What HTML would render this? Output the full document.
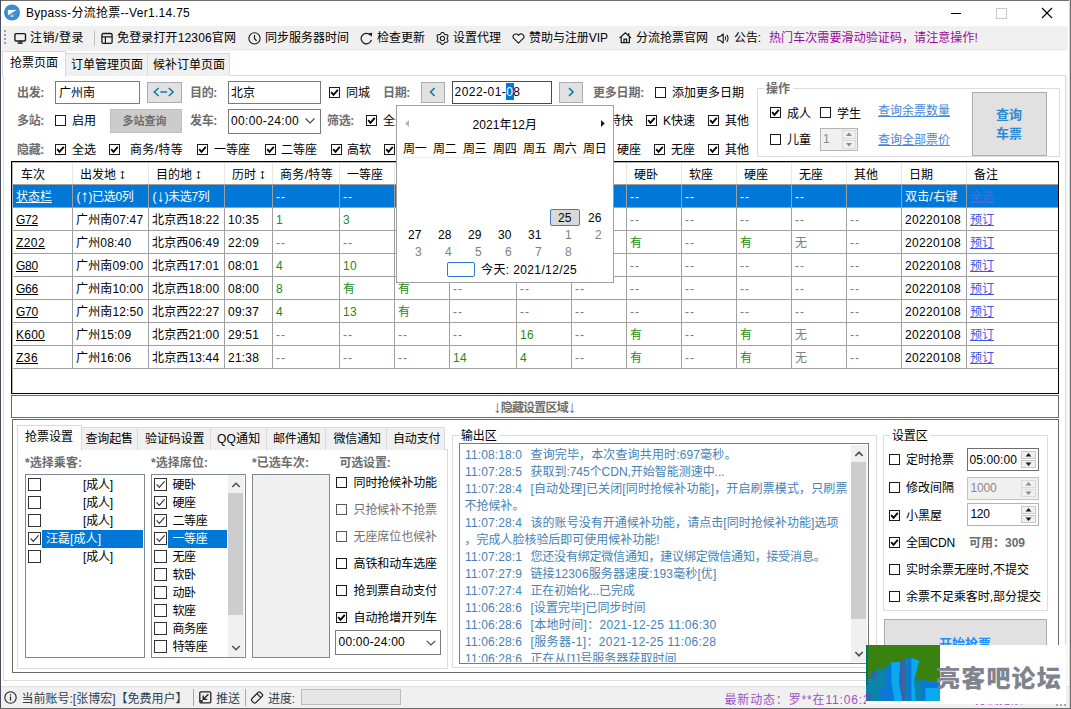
<!DOCTYPE html>
<html lang="zh-CN"><head><meta charset="utf-8"><title>Bypass-分流抢票--Ver1.14.75</title>
<style>
html,body{margin:0;padding:0;}
body{width:1071px;height:709px;overflow:hidden;position:relative;background:#fff;
 font-family:"Liberation Sans","Noto Sans CJK SC",sans-serif;font-size:12px;color:#000;}
.b{position:absolute;box-sizing:content-box;}
.t{position:absolute;white-space:nowrap;}
.ar{font-size:17px;line-height:0;font-weight:normal;position:relative;top:1px;}
</style></head>
<body>
<div class="b" style="left:0px;top:0px;width:1071px;height:709px;background:#fff;"></div>
<div class="b" style="left:0px;top:0px;width:1071px;height:1px;background:#6e6e6e;"></div>
<div class="b" style="left:0px;top:0px;width:1px;height:709px;background:#4a4e5c;"></div>
<div class="b" style="left:1069px;top:0px;width:1px;height:709px;background:#d8d8d8;"></div>
<div class="b" style="left:1070px;top:0px;width:1px;height:709px;background:#6e6e6e;"></div>
<div class="b" style="left:0px;top:708px;width:1071px;height:1px;background:#6a6a6a;"></div>
<svg class="b" style="left:4px;top:4px;" width="16" height="17" viewBox="0 0 16 17"><circle cx="8" cy="8.5" r="8" fill="#3b8ad6"/><rect x="3.9" y="5.9" width="8.2" height="4.9" fill="#fff"/><path d="M12.1 6.3 V10.8 H5 Z" fill="#3b8ad6"/><rect x="6.7" y="11.4" width="2.8" height="1.3" fill="#fff"/></svg>
<span class="t" style="left:26px;top:5.0px;line-height:16px;letter-spacing:0.29px;">Bypass-分流抢票--Ver1.14.75</span>
<div class="b" style="left:951px;top:13px;width:10px;height:1px;background:#000;"></div>
<div class="b" style="left:996px;top:8px;width:9px;height:9px;border:1px solid #c8c8c8;"></div>
<svg class="b" style="left:1041px;top:7px;" width="12" height="12" viewBox="0 0 12 12"><path d="M1 1 L11 11 M11 1 L1 11" stroke="#000" stroke-width="1.1" fill="none"/></svg>
<div class="b" style="left:2px;top:26px;width:1066px;height:25px;background:#f0f0f0;border-radius:0 3px 3px 0;"></div>
<div class="b" style="left:4px;top:30px;width:2px;height:2px;background:#a0a0a0;"></div>
<div class="b" style="left:4px;top:34px;width:2px;height:2px;background:#a0a0a0;"></div>
<div class="b" style="left:4px;top:38px;width:2px;height:2px;background:#a0a0a0;"></div>
<div class="b" style="left:4px;top:42px;width:2px;height:2px;background:#a0a0a0;"></div>
<svg class="b" style="left:13.5px;top:31.5px;" width="13" height="13" viewBox="0 0 13 13"><rect x="0.9" y="1.6" width="10.6" height="7.4" rx="1.2" fill="none" stroke="#1a1a1a" stroke-width="1.4"/><path d="M3.6 11.2 H8.8" fill="none" stroke="#1a1a1a" stroke-width="1.3"/><path d="M4.6 9 H7.8 V10.6 H4.6 Z" fill="#1a1a1a"/></svg>
<span class="t" style="left:30px;top:30.0px;line-height:16px;letter-spacing:0.53px;">注销/登录</span>
<div class="b" style="left:94px;top:31px;width:1px;height:15px;background:#c0c0c0;"></div>
<svg class="b" style="left:100.5px;top:31.5px;" width="13" height="13" viewBox="0 0 13 13"><rect x="0.9" y="1.5" width="10.2" height="9.8" rx="1.4" fill="none" stroke="#1a1a1a" stroke-width="1.3"/><path d="M1 4.9 H11 M4.4 4.9 V11.2" fill="none" stroke="#1a1a1a" stroke-width="1.2"/></svg>
<span class="t" style="left:117px;top:30.0px;line-height:16px;letter-spacing:0.14px;">免登录打开12306官网</span>
<svg class="b" style="left:247.5px;top:31.5px;" width="13" height="13" viewBox="0 0 13 13"><circle cx="6.5" cy="6.4" r="5.6" fill="none" stroke="#1a1a1a" stroke-width="1.1"/><path d="M6.5 3 V6.8 L8.6 8.7" fill="none" stroke="#1a1a1a" stroke-width="1.2"/></svg>
<span class="t" style="left:265px;top:30.0px;line-height:16px;">同步服务器时间</span>
<svg class="b" style="left:359.5px;top:31.5px;" width="13" height="13" viewBox="0 0 13 13"><path d="M10.1 3.0 A5.2 5.2 0 1 0 11.4 7.8" fill="none" stroke="#1a1a1a" stroke-width="1.2"/><path d="M8.4 1.3 L12.2 0.8 L11.8 4.8 Z" fill="#1a1a1a"/></svg>
<span class="t" style="left:377px;top:30.0px;line-height:16px;">检查更新</span>
<svg class="b" style="left:435.5px;top:31.5px;" width="13" height="13" viewBox="0 0 13 13"><path d="M11.1 6.4 L11.2 6.8 L11.4 7.3 L11.7 7.8 L11.9 8.4 L11.9 8.9 L11.8 9.4 L11.4 9.8 L10.9 10.1 L10.3 10.2 L9.7 10.2 L9.2 10.3 L8.8 10.4 L8.5 10.7 L8.2 11.1 L7.9 11.6 L7.5 12.0 L7.0 12.4 L6.5 12.5 L6.0 12.4 L5.5 12.0 L5.1 11.6 L4.8 11.1 L4.5 10.7 L4.2 10.4 L3.8 10.3 L3.3 10.2 L2.7 10.2 L2.1 10.1 L1.6 9.8 L1.2 9.5 L1.1 8.9 L1.1 8.4 L1.3 7.8 L1.6 7.3 L1.8 6.8 L1.9 6.4 L1.8 6.0 L1.6 5.5 L1.3 5.0 L1.1 4.4 L1.1 3.9 L1.2 3.3 L1.6 3.0 L2.1 2.7 L2.7 2.6 L3.3 2.6 L3.8 2.5 L4.2 2.4 L4.5 2.1 L4.8 1.7 L5.1 1.2 L5.5 0.8 L6.0 0.4 L6.5 0.3 L7.0 0.4 L7.5 0.8 L7.9 1.2 L8.2 1.7 L8.5 2.1 L8.8 2.4 L9.2 2.5 L9.7 2.6 L10.3 2.6 L10.9 2.7 L11.4 3.0 L11.8 3.4 L11.9 3.9 L11.9 4.4 L11.7 5.0 L11.4 5.5 L11.2 6.0 Z" fill="none" stroke="#1a1a1a" stroke-width="1.1" stroke-linejoin="round"/><circle cx="6.5" cy="6.4" r="2.1" fill="none" stroke="#1a1a1a" stroke-width="1.1"/></svg>
<span class="t" style="left:453px;top:30.0px;line-height:16px;">设置代理</span>
<svg class="b" style="left:511.5px;top:33.0px;" width="13" height="11" viewBox="0 0 13 11"><path d="M6.5 10.2 L1.5 5.2 A2.8 2.8 0 0 1 6.5 2.4 A2.8 2.8 0 0 1 11.5 5.2 Z" fill="none" stroke="#1a1a1a" stroke-width="1.1" stroke-linejoin="round"/></svg>
<span class="t" style="left:529px;top:30.0px;line-height:16px;letter-spacing:-0.04px;">赞助与注册VIP</span>
<svg class="b" style="left:618.5px;top:31.5px;" width="13" height="12" viewBox="0 0 13 12"><path d="M0.6 6 L6.3 0.9 L12 6 M2.2 4.8 V10.7 H10.4 V4.8 M5 10.7 V7.2 H7.6 V10.7 M9.8 1 V3.2" fill="none" stroke="#1a1a1a" stroke-width="1.2"/></svg>
<span class="t" style="left:636px;top:30.0px;line-height:16px;">分流抢票官网</span>
<svg class="b" style="left:716.5px;top:32.5px;" width="13" height="11" viewBox="0 0 13 11"><path d="M0.8 3.6 H3 L6.2 0.9 V10 L3 7.3 H0.8 Z" fill="none" stroke="#1a1a1a" stroke-width="1.1" stroke-linejoin="round"/><path d="M8 3.4 Q9.4 5.4 8 7.4 M9.8 1.9 Q12.3 5.4 9.8 8.9" fill="none" stroke="#1a1a1a" stroke-width="1.1"/></svg>
<span class="t" style="left:734px;top:30.0px;line-height:16px;letter-spacing:-0.12px;">公告:</span>
<span class="t" style="left:769px;top:30.0px;line-height:16px;color:#9a0a9a;letter-spacing:0.09px;">热门车次需要滑动验证码，请注意操作!</span>
<div class="b" style="left:3px;top:75px;width:1061px;height:604px;border:1px solid #dcdcdc;"></div>
<div class="b" style="left:1066px;top:76px;width:2px;height:605px;background:#f6f6f6;"></div>
<div class="b" style="left:65px;top:53px;width:82px;height:22px;background:#f0f0f0;border:1px solid #d9d9d9;border-bottom:none;"></div>
<div class="b" style="left:147px;top:53px;width:81px;height:22px;background:#f0f0f0;border:1px solid #d9d9d9;border-bottom:none;"></div>
<div class="b" style="left:2px;top:51px;width:62px;height:25px;background:#fff;border:1px solid #d9d9d9;border-bottom:none;"></div>
<span class="t" style="left:10px;top:55.0px;line-height:16px;">抢票页面</span>
<span class="t" style="left:71px;top:57.0px;line-height:16px;">订单管理页面</span>
<span class="t" style="left:153px;top:57.0px;line-height:16px;">候补订单页面</span>
<span class="t" style="left:17px;top:85.0px;line-height:16px;color:#6d6d6d;font-weight:700;letter-spacing:-0.33px;">出发:</span>
<div class="b" style="left:55px;top:81px;width:83px;height:21px;background:#fff;border:1px solid #7a7a7a;"></div>
<span class="t" style="left:59px;top:85.0px;line-height:16px;">广州南</span>
<div class="b" style="left:147px;top:82px;width:33px;height:19px;background:#e1e1e1;border:1px solid #adadad;"></div>
<svg class="b" style="left:153px;top:87px;" width="24" height="10" viewBox="0 0 24 10"><path d="M5.6 1 L1.3 5 L5.6 9 M7.4 5 H14.2 M15.8 1 L20.1 5 L15.8 9" fill="none" stroke="#0a78aa" stroke-width="1.5"/></svg>
<span class="t" style="left:190px;top:85.0px;line-height:16px;color:#6d6d6d;font-weight:700;letter-spacing:-0.33px;">目的:</span>
<div class="b" style="left:228px;top:81px;width:91px;height:21px;background:#fff;border:1px solid #7a7a7a;"></div>
<span class="t" style="left:231px;top:85.0px;line-height:16px;letter-spacing:-0.01px;">北京</span>
<div class="b" style="left:329px;top:87px;width:9px;height:9px;background:#fff;border:1px solid #1a1a1a;"></div>
<svg class="b" style="left:329px;top:87px;" width="11" height="11" viewBox="0 0 11 11"><path d="M2.2 5.2 L4.5 7.8 L8.8 2.8" fill="none" stroke="#000" stroke-width="1.9"/></svg>
<span class="t" style="left:346px;top:85.0px;line-height:16px;letter-spacing:-0.01px;">同城</span>
<span class="t" style="left:383px;top:85.0px;line-height:16px;color:#6d6d6d;font-weight:700;letter-spacing:-0.33px;">日期:</span>
<div class="b" style="left:421px;top:82px;width:22px;height:19px;background:#e1e1e1;border:1px solid #adadad;"></div>
<svg class="b" style="left:429px;top:87px;" width="8" height="10" viewBox="0 0 8 10"><path d="M5.6 1 L1.6 5 L5.6 9" fill="none" stroke="#0a78aa" stroke-width="1.6"/></svg>
<div class="b" style="left:452px;top:81px;width:98px;height:21px;background:#fff;border:1px solid #4a4a4a;"></div>
<div class="b" style="left:506px;top:83px;width:8px;height:16.5px;background:#0078d7;"></div>
<span class="t" style="left:454.5px;top:84.0px;line-height:16px;letter-spacing:0.46px;">2022-01-<span style="color:#fff">0</span>8</span>
<div class="b" style="left:559px;top:82px;width:22px;height:19px;background:#e1e1e1;border:1px solid #adadad;"></div>
<svg class="b" style="left:567px;top:87px;" width="8" height="10" viewBox="0 0 8 10"><path d="M2 1 L6 5 L2 9" fill="none" stroke="#0a78aa" stroke-width="1.6"/></svg>
<span class="t" style="left:593px;top:85.0px;line-height:16px;color:#6d6d6d;font-weight:700;letter-spacing:-0.20px;">更多日期:</span>
<div class="b" style="left:655px;top:87px;width:9px;height:9px;background:#fff;border:1px solid #1a1a1a;"></div>
<span class="t" style="left:672px;top:85.0px;line-height:16px;">添加更多日期</span>
<span class="t" style="left:17px;top:113.0px;line-height:16px;color:#6d6d6d;font-weight:700;letter-spacing:-0.33px;">多站:</span>
<div class="b" style="left:55px;top:115px;width:9px;height:9px;background:#fff;border:1px solid #1a1a1a;"></div>
<span class="t" style="left:72px;top:113.0px;line-height:16px;letter-spacing:-0.01px;">启用</span>
<div class="b" style="left:110px;top:109px;width:70px;height:22px;background:#cccccc;border:1px solid #bfbfbf;"></div>
<span class="t" style="left:122.5px;top:113.0px;line-height:16px;color:#6d6d6d;font-size:11px;font-weight:700;">多站查询</span>
<span class="t" style="left:190px;top:113.0px;line-height:16px;color:#6d6d6d;font-weight:700;letter-spacing:-0.33px;">发车:</span>
<div class="b" style="left:228px;top:109px;width:91px;height:23px;background:#fff;border:1px solid #7a7a7a;"></div>
<span class="t" style="left:231px;top:113.0px;line-height:16px;letter-spacing:0.36px;">00:00-24:00</span>
<svg class="b" style="left:304px;top:117px;" width="12" height="8" viewBox="0 0 12 8"><path d="M1.5 1.5 L6 6 L10.5 1.5" fill="none" stroke="#444" stroke-width="1.1"/></svg>
<span class="t" style="left:327px;top:113.0px;line-height:16px;color:#6d6d6d;font-weight:700;letter-spacing:-0.33px;">筛选:</span>
<div class="b" style="left:366px;top:115px;width:9px;height:9px;background:#fff;border:1px solid #1a1a1a;"></div>
<svg class="b" style="left:366px;top:115px;" width="11" height="11" viewBox="0 0 11 11"><path d="M2.2 5.2 L4.5 7.8 L8.8 2.8" fill="none" stroke="#000" stroke-width="1.9"/></svg>
<span class="t" style="left:383px;top:113.0px;line-height:16px;letter-spacing:-0.01px;">全选</span>
<span class="t" style="left:609px;top:113.0px;line-height:16px;letter-spacing:-0.01px;">特快</span>
<div class="b" style="left:646px;top:115px;width:9px;height:9px;background:#fff;border:1px solid #1a1a1a;"></div>
<svg class="b" style="left:646px;top:115px;" width="11" height="11" viewBox="0 0 11 11"><path d="M2.2 5.2 L4.5 7.8 L8.8 2.8" fill="none" stroke="#000" stroke-width="1.9"/></svg>
<span class="t" style="left:663px;top:113.0px;line-height:16px;">K快速</span>
<div class="b" style="left:708px;top:115px;width:9px;height:9px;background:#fff;border:1px solid #1a1a1a;"></div>
<svg class="b" style="left:708px;top:115px;" width="11" height="11" viewBox="0 0 11 11"><path d="M2.2 5.2 L4.5 7.8 L8.8 2.8" fill="none" stroke="#000" stroke-width="1.9"/></svg>
<span class="t" style="left:725px;top:113.0px;line-height:16px;letter-spacing:-0.01px;">其他</span>
<span class="t" style="left:17px;top:142.0px;line-height:16px;color:#6d6d6d;font-weight:700;letter-spacing:-0.33px;">隐藏:</span>
<div class="b" style="left:55px;top:144px;width:9px;height:9px;background:#fff;border:1px solid #1a1a1a;"></div>
<svg class="b" style="left:55px;top:144px;" width="11" height="11" viewBox="0 0 11 11"><path d="M2.2 5.2 L4.5 7.8 L8.8 2.8" fill="none" stroke="#000" stroke-width="1.9"/></svg>
<span class="t" style="left:72px;top:142.0px;line-height:16px;letter-spacing:-0.01px;">全选</span>
<div class="b" style="left:109px;top:144px;width:9px;height:9px;background:#fff;border:1px solid #1a1a1a;"></div>
<svg class="b" style="left:109px;top:144px;" width="11" height="11" viewBox="0 0 11 11"><path d="M2.2 5.2 L4.5 7.8 L8.8 2.8" fill="none" stroke="#000" stroke-width="1.9"/></svg>
<span class="t" style="left:130px;top:142.0px;line-height:16px;letter-spacing:0.33px;">商务/特等</span>
<div class="b" style="left:197px;top:144px;width:9px;height:9px;background:#fff;border:1px solid #1a1a1a;"></div>
<svg class="b" style="left:197px;top:144px;" width="11" height="11" viewBox="0 0 11 11"><path d="M2.2 5.2 L4.5 7.8 L8.8 2.8" fill="none" stroke="#000" stroke-width="1.9"/></svg>
<span class="t" style="left:214px;top:142.0px;line-height:16px;">一等座</span>
<div class="b" style="left:265px;top:144px;width:9px;height:9px;background:#fff;border:1px solid #1a1a1a;"></div>
<svg class="b" style="left:265px;top:144px;" width="11" height="11" viewBox="0 0 11 11"><path d="M2.2 5.2 L4.5 7.8 L8.8 2.8" fill="none" stroke="#000" stroke-width="1.9"/></svg>
<span class="t" style="left:281px;top:142.0px;line-height:16px;">二等座</span>
<div class="b" style="left:331px;top:144px;width:9px;height:9px;background:#fff;border:1px solid #1a1a1a;"></div>
<svg class="b" style="left:331px;top:144px;" width="11" height="11" viewBox="0 0 11 11"><path d="M2.2 5.2 L4.5 7.8 L8.8 2.8" fill="none" stroke="#000" stroke-width="1.9"/></svg>
<span class="t" style="left:347px;top:142.0px;line-height:16px;letter-spacing:-0.01px;">高软</span>
<div class="b" style="left:384px;top:144px;width:9px;height:9px;background:#fff;border:1px solid #1a1a1a;"></div>
<svg class="b" style="left:384px;top:144px;" width="11" height="11" viewBox="0 0 11 11"><path d="M2.2 5.2 L4.5 7.8 L8.8 2.8" fill="none" stroke="#000" stroke-width="1.9"/></svg>
<span class="t" style="left:401px;top:142.0px;line-height:16px;letter-spacing:-0.01px;">软卧</span>
<span class="t" style="left:617px;top:142.0px;line-height:16px;letter-spacing:-0.01px;">硬座</span>
<div class="b" style="left:654px;top:144px;width:9px;height:9px;background:#fff;border:1px solid #1a1a1a;"></div>
<svg class="b" style="left:654px;top:144px;" width="11" height="11" viewBox="0 0 11 11"><path d="M2.2 5.2 L4.5 7.8 L8.8 2.8" fill="none" stroke="#000" stroke-width="1.9"/></svg>
<span class="t" style="left:671px;top:142.0px;line-height:16px;letter-spacing:-0.01px;">无座</span>
<div class="b" style="left:708px;top:144px;width:9px;height:9px;background:#fff;border:1px solid #1a1a1a;"></div>
<svg class="b" style="left:708px;top:144px;" width="11" height="11" viewBox="0 0 11 11"><path d="M2.2 5.2 L4.5 7.8 L8.8 2.8" fill="none" stroke="#000" stroke-width="1.9"/></svg>
<span class="t" style="left:725px;top:142.0px;line-height:16px;letter-spacing:-0.01px;">其他</span>
<div class="b" style="left:757px;top:88px;width:301px;height:67px;border:1px solid #dcdcdc;"></div>
<div class="b" style="left:764px;top:80px;width:29px;height:16px;background:#fff;"></div>
<span class="t" style="left:766px;top:80.5px;line-height:16px;color:#6d6d6d;font-weight:700;letter-spacing:-0.01px;">操作</span>
<div class="b" style="left:770px;top:107px;width:9px;height:9px;background:#fff;border:1px solid #1a1a1a;"></div>
<svg class="b" style="left:770px;top:107px;" width="11" height="11" viewBox="0 0 11 11"><path d="M2.2 5.2 L4.5 7.8 L8.8 2.8" fill="none" stroke="#000" stroke-width="1.9"/></svg>
<span class="t" style="left:787px;top:105.5px;line-height:16px;letter-spacing:-0.01px;">成人</span>
<div class="b" style="left:820px;top:107px;width:9px;height:9px;background:#fff;border:1px solid #1a1a1a;"></div>
<span class="t" style="left:837px;top:105.5px;line-height:16px;letter-spacing:-0.01px;">学生</span>
<div class="b" style="left:770px;top:134px;width:9px;height:9px;background:#fff;border:1px solid #1a1a1a;"></div>
<span class="t" style="left:787px;top:132.0px;line-height:16px;letter-spacing:-0.01px;">儿童</span>
<div class="b" style="left:820px;top:128px;width:36px;height:21px;background:#f0f0f0;border:1px solid #b4b4b4;"></div>
<span class="t" style="left:823px;top:131.0px;line-height:16px;color:#8a8a8a;">1</span>
<div class="b" style="left:842px;top:130px;width:12px;height:7px;background:#f0f0f0;border:1px solid #dadada;"></div>
<svg class="b" style="left:842px;top:130px;" width="14" height="9" viewBox="0 0 14 9"><path d="M4.0 6.0 L7.0 2.5 L10.0 6.0 Z" fill="#8a8a8a"/></svg>
<div class="b" style="left:842px;top:140px;width:12px;height:7px;background:#f0f0f0;border:1px solid #dadada;"></div>
<svg class="b" style="left:842px;top:140px;" width="14" height="9" viewBox="0 0 14 9"><path d="M4.0 3.0 L7.0 6.5 L10.0 3.0 Z" fill="#8a8a8a"/></svg>
<span class="t" style="left:878px;top:102.5px;line-height:16px;color:#4a86d8;text-decoration:underline;">查询余票数量</span>
<span class="t" style="left:878px;top:132.0px;line-height:16px;color:#4a86d8;text-decoration:underline;">查询全部票价</span>
<div class="b" style="left:972px;top:92px;width:73px;height:62px;background:#e1e1e1;border:1px solid #adadad;"></div>
<span class="t" style="left:996px;top:106.5px;line-height:16px;color:#2a8ad4;font-size:13px;font-weight:bold;letter-spacing:-0.01px;">查询</span>
<span class="t" style="left:996px;top:125.5px;line-height:16px;color:#2a8ad4;font-size:13px;font-weight:bold;letter-spacing:-0.01px;">车票</span>
<div class="b" style="left:11px;top:161px;width:1046px;height:231px;background:#fff;border:1px solid #000;"></div>
<div class="b" style="left:12px;top:162px;width:1046px;height:1px;background:#b4b4b4;"></div>
<div class="b" style="left:12px;top:162px;width:1px;height:231px;background:#b4b4b4;"></div>
<span class="t" style="left:21px;top:167.0px;line-height:16px;letter-spacing:-0.01px;">车次</span>
<span class="t" style="left:80px;top:167.0px;line-height:16px;">出发地</span>
<svg class="b" style="left:120px;top:170px;" width="5" height="10" viewBox="0 0 5 10"><path d="M2.5 1 V9 M0.8 3 L2.5 1 L4.2 3 M0.8 7 L2.5 9 L4.2 7" fill="none" stroke="#333" stroke-width="0.9"/></svg>
<span class="t" style="left:156px;top:167.0px;line-height:16px;">目的地</span>
<svg class="b" style="left:196px;top:170px;" width="5" height="10" viewBox="0 0 5 10"><path d="M2.5 1 V9 M0.8 3 L2.5 1 L4.2 3 M0.8 7 L2.5 9 L4.2 7" fill="none" stroke="#333" stroke-width="0.9"/></svg>
<span class="t" style="left:232px;top:167.0px;line-height:16px;letter-spacing:-0.01px;">历时</span>
<svg class="b" style="left:260px;top:170px;" width="5" height="10" viewBox="0 0 5 10"><path d="M2.5 1 V9 M0.8 3 L2.5 1 L4.2 3 M0.8 7 L2.5 9 L4.2 7" fill="none" stroke="#333" stroke-width="0.9"/></svg>
<span class="t" style="left:280px;top:167.0px;line-height:16px;letter-spacing:0.33px;">商务/特等</span>
<span class="t" style="left:347px;top:167.0px;line-height:16px;">一等座</span>
<span class="t" style="left:402px;top:167.0px;line-height:16px;">二等座</span>
<span class="t" style="left:457px;top:167.0px;line-height:16px;letter-spacing:-0.01px;">高软</span>
<span class="t" style="left:524px;top:167.0px;line-height:16px;letter-spacing:-0.01px;">软卧</span>
<span class="t" style="left:579px;top:167.0px;line-height:16px;letter-spacing:-0.01px;">动卧</span>
<span class="t" style="left:634px;top:167.0px;line-height:16px;letter-spacing:-0.01px;">硬卧</span>
<span class="t" style="left:689px;top:167.0px;line-height:16px;letter-spacing:-0.01px;">软座</span>
<span class="t" style="left:744px;top:167.0px;line-height:16px;letter-spacing:-0.01px;">硬座</span>
<span class="t" style="left:799px;top:167.0px;line-height:16px;letter-spacing:-0.01px;">无座</span>
<span class="t" style="left:854px;top:167.0px;line-height:16px;letter-spacing:-0.01px;">其他</span>
<span class="t" style="left:909px;top:167.0px;line-height:16px;letter-spacing:-0.01px;">日期</span>
<span class="t" style="left:974px;top:167.0px;line-height:16px;letter-spacing:-0.01px;">备注</span>
<div class="b" style="left:13px;top:185px;width:1045px;height:22px;background:#0078d7;"></div>
<div class="b" style="left:72px;top:163px;width:1px;height:21px;background:#e5e5e5;"></div>
<div class="b" style="left:72px;top:184px;width:1px;height:184px;background:#a0a0a0;"></div>
<div class="b" style="left:148px;top:163px;width:1px;height:21px;background:#e5e5e5;"></div>
<div class="b" style="left:148px;top:184px;width:1px;height:184px;background:#a0a0a0;"></div>
<div class="b" style="left:224px;top:163px;width:1px;height:21px;background:#e5e5e5;"></div>
<div class="b" style="left:224px;top:184px;width:1px;height:184px;background:#a0a0a0;"></div>
<div class="b" style="left:272px;top:163px;width:1px;height:21px;background:#e5e5e5;"></div>
<div class="b" style="left:272px;top:184px;width:1px;height:184px;background:#a0a0a0;"></div>
<div class="b" style="left:339px;top:163px;width:1px;height:21px;background:#e5e5e5;"></div>
<div class="b" style="left:339px;top:184px;width:1px;height:184px;background:#a0a0a0;"></div>
<div class="b" style="left:394px;top:163px;width:1px;height:21px;background:#e5e5e5;"></div>
<div class="b" style="left:394px;top:184px;width:1px;height:184px;background:#a0a0a0;"></div>
<div class="b" style="left:449px;top:163px;width:1px;height:21px;background:#e5e5e5;"></div>
<div class="b" style="left:449px;top:184px;width:1px;height:184px;background:#a0a0a0;"></div>
<div class="b" style="left:516px;top:163px;width:1px;height:21px;background:#e5e5e5;"></div>
<div class="b" style="left:516px;top:184px;width:1px;height:184px;background:#a0a0a0;"></div>
<div class="b" style="left:571px;top:163px;width:1px;height:21px;background:#e5e5e5;"></div>
<div class="b" style="left:571px;top:184px;width:1px;height:184px;background:#a0a0a0;"></div>
<div class="b" style="left:626px;top:163px;width:1px;height:21px;background:#e5e5e5;"></div>
<div class="b" style="left:626px;top:184px;width:1px;height:184px;background:#a0a0a0;"></div>
<div class="b" style="left:681px;top:163px;width:1px;height:21px;background:#e5e5e5;"></div>
<div class="b" style="left:681px;top:184px;width:1px;height:184px;background:#a0a0a0;"></div>
<div class="b" style="left:736px;top:163px;width:1px;height:21px;background:#e5e5e5;"></div>
<div class="b" style="left:736px;top:184px;width:1px;height:184px;background:#a0a0a0;"></div>
<div class="b" style="left:791px;top:163px;width:1px;height:21px;background:#e5e5e5;"></div>
<div class="b" style="left:791px;top:184px;width:1px;height:184px;background:#a0a0a0;"></div>
<div class="b" style="left:846px;top:163px;width:1px;height:21px;background:#e5e5e5;"></div>
<div class="b" style="left:846px;top:184px;width:1px;height:184px;background:#a0a0a0;"></div>
<div class="b" style="left:901px;top:163px;width:1px;height:21px;background:#e5e5e5;"></div>
<div class="b" style="left:901px;top:184px;width:1px;height:184px;background:#a0a0a0;"></div>
<div class="b" style="left:966px;top:163px;width:1px;height:21px;background:#e5e5e5;"></div>
<div class="b" style="left:966px;top:184px;width:1px;height:184px;background:#a0a0a0;"></div>
<div class="b" style="left:13px;top:184px;width:1045px;height:1px;background:#a0a0a0;"></div>
<div class="b" style="left:13px;top:207px;width:1045px;height:1px;background:#a0a0a0;"></div>
<div class="b" style="left:13px;top:230px;width:1045px;height:1px;background:#a0a0a0;"></div>
<div class="b" style="left:13px;top:253px;width:1045px;height:1px;background:#a0a0a0;"></div>
<div class="b" style="left:13px;top:276px;width:1045px;height:1px;background:#a0a0a0;"></div>
<div class="b" style="left:13px;top:299px;width:1045px;height:1px;background:#a0a0a0;"></div>
<div class="b" style="left:13px;top:322px;width:1045px;height:1px;background:#a0a0a0;"></div>
<div class="b" style="left:13px;top:345px;width:1045px;height:1px;background:#a0a0a0;"></div>
<div class="b" style="left:13px;top:368px;width:1045px;height:1px;background:#a0a0a0;"></div>
<span class="t" style="left:16px;top:189.0px;line-height:16px;color:#fff;text-decoration:underline;">状态栏</span>
<span class="t" style="left:76.5px;top:189.0px;line-height:16px;color:#fff;letter-spacing:-0.31px;">(<span class="ar">↑</span>)已选0列</span>
<span class="t" style="left:152.5px;top:189.0px;line-height:16px;color:#fff;letter-spacing:-0.31px;">(<span class="ar">↓</span>)未选7列</span>
<span class="t" style="left:276px;top:189.0px;line-height:16px;color:#fff;letter-spacing:0.90px;">--</span>
<span class="t" style="left:343px;top:189.0px;line-height:16px;color:#fff;letter-spacing:0.90px;">--</span>
<span class="t" style="left:398px;top:189.0px;line-height:16px;color:#fff;letter-spacing:0.90px;">--</span>
<span class="t" style="left:453px;top:189.0px;line-height:16px;color:#fff;letter-spacing:0.90px;">--</span>
<span class="t" style="left:520px;top:189.0px;line-height:16px;color:#fff;letter-spacing:0.90px;">--</span>
<span class="t" style="left:575px;top:189.0px;line-height:16px;color:#fff;letter-spacing:0.90px;">--</span>
<span class="t" style="left:630px;top:189.0px;line-height:16px;color:#fff;letter-spacing:0.90px;">--</span>
<span class="t" style="left:685px;top:189.0px;line-height:16px;color:#fff;letter-spacing:0.90px;">--</span>
<span class="t" style="left:740px;top:189.0px;line-height:16px;color:#fff;letter-spacing:0.90px;">--</span>
<span class="t" style="left:795px;top:189.0px;line-height:16px;color:#fff;letter-spacing:0.90px;">--</span>
<span class="t" style="left:905px;top:189.0px;line-height:16px;color:#fff;letter-spacing:0.29px;">双击/右键</span>
<span class="t" style="left:970px;top:189.0px;line-height:16px;color:#4a6ee0;letter-spacing:-0.01px;text-decoration:underline;">全选</span>
<span class="t" style="left:16px;top:212.0px;line-height:16px;letter-spacing:-0.23px;text-decoration:underline;">G72</span>
<span class="t" style="left:76px;top:212.0px;line-height:16px;letter-spacing:0.15px;">广州南07:47</span>
<span class="t" style="left:152px;top:212.0px;line-height:16px;letter-spacing:0.15px;">北京西18:22</span>
<span class="t" style="left:228px;top:212.0px;line-height:16px;letter-spacing:0.23px;">10:35</span>
<span class="t" style="left:276px;top:212.0px;line-height:16px;color:#228b12;letter-spacing:0.31px;">1</span>
<span class="t" style="left:343px;top:212.0px;line-height:16px;color:#228b12;letter-spacing:0.31px;">3</span>
<span class="t" style="left:398px;top:212.0px;line-height:16px;color:#228b12;letter-spacing:-0.02px;">有</span>
<span class="t" style="left:453px;top:212.0px;line-height:16px;color:#7a7a7a;letter-spacing:0.90px;">--</span>
<span class="t" style="left:520px;top:212.0px;line-height:16px;color:#7a7a7a;letter-spacing:0.90px;">--</span>
<span class="t" style="left:575px;top:212.0px;line-height:16px;color:#7a7a7a;letter-spacing:0.90px;">--</span>
<span class="t" style="left:630px;top:212.0px;line-height:16px;color:#7a7a7a;letter-spacing:0.90px;">--</span>
<span class="t" style="left:685px;top:212.0px;line-height:16px;color:#7a7a7a;letter-spacing:0.90px;">--</span>
<span class="t" style="left:740px;top:212.0px;line-height:16px;color:#7a7a7a;letter-spacing:0.90px;">--</span>
<span class="t" style="left:795px;top:212.0px;line-height:16px;color:#7a7a7a;letter-spacing:0.90px;">--</span>
<span class="t" style="left:850px;top:212.0px;line-height:16px;color:#7a7a7a;letter-spacing:0.90px;">--</span>
<span class="t" style="left:905px;top:212.0px;line-height:16px;letter-spacing:0.33px;">20220108</span>
<span class="t" style="left:970px;top:212.0px;line-height:16px;color:#3a55e8;letter-spacing:-0.01px;text-decoration:underline;">预订</span>
<span class="t" style="left:16px;top:235.0px;line-height:16px;letter-spacing:0.41px;text-decoration:underline;">Z202</span>
<span class="t" style="left:76px;top:235.0px;line-height:16px;letter-spacing:0.17px;">广州08:40</span>
<span class="t" style="left:152px;top:235.0px;line-height:16px;letter-spacing:0.15px;">北京西06:49</span>
<span class="t" style="left:228px;top:235.0px;line-height:16px;letter-spacing:0.23px;">22:09</span>
<span class="t" style="left:276px;top:235.0px;line-height:16px;color:#7a7a7a;letter-spacing:0.90px;">--</span>
<span class="t" style="left:343px;top:235.0px;line-height:16px;color:#7a7a7a;letter-spacing:0.90px;">--</span>
<span class="t" style="left:398px;top:235.0px;line-height:16px;color:#7a7a7a;letter-spacing:0.90px;">--</span>
<span class="t" style="left:453px;top:235.0px;line-height:16px;color:#7a7a7a;letter-spacing:0.90px;">--</span>
<span class="t" style="left:520px;top:235.0px;line-height:16px;color:#7a7a7a;letter-spacing:0.90px;">--</span>
<span class="t" style="left:575px;top:235.0px;line-height:16px;color:#7a7a7a;letter-spacing:0.90px;">--</span>
<span class="t" style="left:630px;top:235.0px;line-height:16px;color:#228b12;letter-spacing:-0.02px;">有</span>
<span class="t" style="left:685px;top:235.0px;line-height:16px;color:#7a7a7a;letter-spacing:0.90px;">--</span>
<span class="t" style="left:740px;top:235.0px;line-height:16px;color:#228b12;letter-spacing:-0.02px;">有</span>
<span class="t" style="left:795px;top:235.0px;line-height:16px;color:#808080;letter-spacing:-0.02px;">无</span>
<span class="t" style="left:850px;top:235.0px;line-height:16px;color:#7a7a7a;letter-spacing:0.90px;">--</span>
<span class="t" style="left:905px;top:235.0px;line-height:16px;letter-spacing:0.33px;">20220108</span>
<span class="t" style="left:970px;top:235.0px;line-height:16px;color:#3a55e8;letter-spacing:-0.01px;text-decoration:underline;">预订</span>
<span class="t" style="left:16px;top:258.0px;line-height:16px;letter-spacing:-0.23px;text-decoration:underline;">G80</span>
<span class="t" style="left:76px;top:258.0px;line-height:16px;letter-spacing:0.15px;">广州南09:00</span>
<span class="t" style="left:152px;top:258.0px;line-height:16px;letter-spacing:0.15px;">北京西17:01</span>
<span class="t" style="left:228px;top:258.0px;line-height:16px;letter-spacing:0.23px;">08:01</span>
<span class="t" style="left:276px;top:258.0px;line-height:16px;color:#228b12;letter-spacing:0.31px;">4</span>
<span class="t" style="left:343px;top:258.0px;line-height:16px;color:#228b12;letter-spacing:0.32px;">10</span>
<span class="t" style="left:398px;top:258.0px;line-height:16px;color:#228b12;letter-spacing:-0.02px;">有</span>
<span class="t" style="left:453px;top:258.0px;line-height:16px;color:#7a7a7a;letter-spacing:0.90px;">--</span>
<span class="t" style="left:520px;top:258.0px;line-height:16px;color:#7a7a7a;letter-spacing:0.90px;">--</span>
<span class="t" style="left:575px;top:258.0px;line-height:16px;color:#7a7a7a;letter-spacing:0.90px;">--</span>
<span class="t" style="left:630px;top:258.0px;line-height:16px;color:#7a7a7a;letter-spacing:0.90px;">--</span>
<span class="t" style="left:685px;top:258.0px;line-height:16px;color:#7a7a7a;letter-spacing:0.90px;">--</span>
<span class="t" style="left:740px;top:258.0px;line-height:16px;color:#7a7a7a;letter-spacing:0.90px;">--</span>
<span class="t" style="left:795px;top:258.0px;line-height:16px;color:#7a7a7a;letter-spacing:0.90px;">--</span>
<span class="t" style="left:850px;top:258.0px;line-height:16px;color:#7a7a7a;letter-spacing:0.90px;">--</span>
<span class="t" style="left:905px;top:258.0px;line-height:16px;letter-spacing:0.33px;">20220108</span>
<span class="t" style="left:970px;top:258.0px;line-height:16px;color:#3a55e8;letter-spacing:-0.01px;text-decoration:underline;">预订</span>
<span class="t" style="left:16px;top:281.0px;line-height:16px;letter-spacing:-0.23px;text-decoration:underline;">G66</span>
<span class="t" style="left:76px;top:281.0px;line-height:16px;letter-spacing:0.15px;">广州南10:00</span>
<span class="t" style="left:152px;top:281.0px;line-height:16px;letter-spacing:0.15px;">北京西18:00</span>
<span class="t" style="left:228px;top:281.0px;line-height:16px;letter-spacing:0.23px;">08:00</span>
<span class="t" style="left:276px;top:281.0px;line-height:16px;color:#228b12;letter-spacing:0.31px;">8</span>
<span class="t" style="left:343px;top:281.0px;line-height:16px;color:#228b12;letter-spacing:-0.02px;">有</span>
<span class="t" style="left:398px;top:281.0px;line-height:16px;color:#228b12;letter-spacing:-0.02px;">有</span>
<span class="t" style="left:453px;top:281.0px;line-height:16px;color:#7a7a7a;letter-spacing:0.90px;">--</span>
<span class="t" style="left:520px;top:281.0px;line-height:16px;color:#7a7a7a;letter-spacing:0.90px;">--</span>
<span class="t" style="left:575px;top:281.0px;line-height:16px;color:#7a7a7a;letter-spacing:0.90px;">--</span>
<span class="t" style="left:630px;top:281.0px;line-height:16px;color:#7a7a7a;letter-spacing:0.90px;">--</span>
<span class="t" style="left:685px;top:281.0px;line-height:16px;color:#7a7a7a;letter-spacing:0.90px;">--</span>
<span class="t" style="left:740px;top:281.0px;line-height:16px;color:#7a7a7a;letter-spacing:0.90px;">--</span>
<span class="t" style="left:795px;top:281.0px;line-height:16px;color:#7a7a7a;letter-spacing:0.90px;">--</span>
<span class="t" style="left:850px;top:281.0px;line-height:16px;color:#7a7a7a;letter-spacing:0.90px;">--</span>
<span class="t" style="left:905px;top:281.0px;line-height:16px;letter-spacing:0.33px;">20220108</span>
<span class="t" style="left:970px;top:281.0px;line-height:16px;color:#3a55e8;letter-spacing:-0.01px;text-decoration:underline;">预订</span>
<span class="t" style="left:16px;top:304.0px;line-height:16px;letter-spacing:-0.23px;text-decoration:underline;">G70</span>
<span class="t" style="left:76px;top:304.0px;line-height:16px;letter-spacing:0.15px;">广州南12:50</span>
<span class="t" style="left:152px;top:304.0px;line-height:16px;letter-spacing:0.15px;">北京西22:27</span>
<span class="t" style="left:228px;top:304.0px;line-height:16px;letter-spacing:0.23px;">09:37</span>
<span class="t" style="left:276px;top:304.0px;line-height:16px;color:#228b12;letter-spacing:0.31px;">4</span>
<span class="t" style="left:343px;top:304.0px;line-height:16px;color:#228b12;letter-spacing:0.32px;">13</span>
<span class="t" style="left:398px;top:304.0px;line-height:16px;color:#228b12;letter-spacing:-0.02px;">有</span>
<span class="t" style="left:453px;top:304.0px;line-height:16px;color:#7a7a7a;letter-spacing:0.90px;">--</span>
<span class="t" style="left:520px;top:304.0px;line-height:16px;color:#7a7a7a;letter-spacing:0.90px;">--</span>
<span class="t" style="left:575px;top:304.0px;line-height:16px;color:#7a7a7a;letter-spacing:0.90px;">--</span>
<span class="t" style="left:630px;top:304.0px;line-height:16px;color:#7a7a7a;letter-spacing:0.90px;">--</span>
<span class="t" style="left:685px;top:304.0px;line-height:16px;color:#7a7a7a;letter-spacing:0.90px;">--</span>
<span class="t" style="left:740px;top:304.0px;line-height:16px;color:#7a7a7a;letter-spacing:0.90px;">--</span>
<span class="t" style="left:795px;top:304.0px;line-height:16px;color:#7a7a7a;letter-spacing:0.90px;">--</span>
<span class="t" style="left:850px;top:304.0px;line-height:16px;color:#7a7a7a;letter-spacing:0.90px;">--</span>
<span class="t" style="left:905px;top:304.0px;line-height:16px;letter-spacing:0.33px;">20220108</span>
<span class="t" style="left:970px;top:304.0px;line-height:16px;color:#3a55e8;letter-spacing:-0.01px;text-decoration:underline;">预订</span>
<span class="t" style="left:16px;top:327.0px;line-height:16px;letter-spacing:0.24px;text-decoration:underline;">K600</span>
<span class="t" style="left:76px;top:327.0px;line-height:16px;letter-spacing:0.17px;">广州15:09</span>
<span class="t" style="left:152px;top:327.0px;line-height:16px;letter-spacing:0.15px;">北京西21:00</span>
<span class="t" style="left:228px;top:327.0px;line-height:16px;letter-spacing:0.23px;">29:51</span>
<span class="t" style="left:276px;top:327.0px;line-height:16px;color:#7a7a7a;letter-spacing:0.90px;">--</span>
<span class="t" style="left:343px;top:327.0px;line-height:16px;color:#7a7a7a;letter-spacing:0.90px;">--</span>
<span class="t" style="left:398px;top:327.0px;line-height:16px;color:#7a7a7a;letter-spacing:0.90px;">--</span>
<span class="t" style="left:453px;top:327.0px;line-height:16px;color:#7a7a7a;letter-spacing:0.90px;">--</span>
<span class="t" style="left:520px;top:327.0px;line-height:16px;color:#228b12;letter-spacing:0.32px;">16</span>
<span class="t" style="left:575px;top:327.0px;line-height:16px;color:#7a7a7a;letter-spacing:0.90px;">--</span>
<span class="t" style="left:630px;top:327.0px;line-height:16px;color:#228b12;letter-spacing:-0.02px;">有</span>
<span class="t" style="left:685px;top:327.0px;line-height:16px;color:#7a7a7a;letter-spacing:0.90px;">--</span>
<span class="t" style="left:740px;top:327.0px;line-height:16px;color:#228b12;letter-spacing:-0.02px;">有</span>
<span class="t" style="left:795px;top:327.0px;line-height:16px;color:#808080;letter-spacing:-0.02px;">无</span>
<span class="t" style="left:850px;top:327.0px;line-height:16px;color:#7a7a7a;letter-spacing:0.90px;">--</span>
<span class="t" style="left:905px;top:327.0px;line-height:16px;letter-spacing:0.33px;">20220108</span>
<span class="t" style="left:970px;top:327.0px;line-height:16px;color:#3a55e8;letter-spacing:-0.01px;text-decoration:underline;">预订</span>
<span class="t" style="left:16px;top:350.0px;line-height:16px;letter-spacing:0.44px;text-decoration:underline;">Z36</span>
<span class="t" style="left:76px;top:350.0px;line-height:16px;letter-spacing:0.17px;">广州16:06</span>
<span class="t" style="left:152px;top:350.0px;line-height:16px;letter-spacing:0.15px;">北京西13:44</span>
<span class="t" style="left:228px;top:350.0px;line-height:16px;letter-spacing:0.23px;">21:38</span>
<span class="t" style="left:276px;top:350.0px;line-height:16px;color:#7a7a7a;letter-spacing:0.90px;">--</span>
<span class="t" style="left:343px;top:350.0px;line-height:16px;color:#7a7a7a;letter-spacing:0.90px;">--</span>
<span class="t" style="left:398px;top:350.0px;line-height:16px;color:#7a7a7a;letter-spacing:0.90px;">--</span>
<span class="t" style="left:453px;top:350.0px;line-height:16px;color:#228b12;letter-spacing:0.32px;">14</span>
<span class="t" style="left:520px;top:350.0px;line-height:16px;color:#228b12;letter-spacing:0.31px;">4</span>
<span class="t" style="left:575px;top:350.0px;line-height:16px;color:#7a7a7a;letter-spacing:0.90px;">--</span>
<span class="t" style="left:630px;top:350.0px;line-height:16px;color:#228b12;letter-spacing:-0.02px;">有</span>
<span class="t" style="left:685px;top:350.0px;line-height:16px;color:#7a7a7a;letter-spacing:0.90px;">--</span>
<span class="t" style="left:740px;top:350.0px;line-height:16px;color:#228b12;letter-spacing:-0.02px;">有</span>
<span class="t" style="left:795px;top:350.0px;line-height:16px;color:#808080;letter-spacing:-0.02px;">无</span>
<span class="t" style="left:850px;top:350.0px;line-height:16px;color:#7a7a7a;letter-spacing:0.90px;">--</span>
<span class="t" style="left:905px;top:350.0px;line-height:16px;letter-spacing:0.33px;">20220108</span>
<span class="t" style="left:970px;top:350.0px;line-height:16px;color:#3a55e8;letter-spacing:-0.01px;text-decoration:underline;">预订</span>
<div class="b" style="left:396px;top:105px;width:216px;height:176px;background:#fff;border:1px solid #a0a0a0;"></div>
<svg class="b" style="left:404px;top:119px;" width="6" height="9" viewBox="0 0 6 9"><path d="M5 1 L1.2 4.5 L5 8 Z" fill="#b4b4b4"/></svg>
<svg class="b" style="left:600px;top:119px;" width="6" height="9" viewBox="0 0 6 9"><path d="M1 1 L4.8 4.5 L1 8 Z" fill="#1a1a1a"/></svg>
<span class="t" style="left:472.5px;top:117.0px;line-height:16px;letter-spacing:0.06px;">2021年12月</span>
<span class="t" style="left:403px;top:141.0px;line-height:16px;letter-spacing:-0.26px;">周一</span>
<span class="t" style="left:433px;top:141.0px;line-height:16px;letter-spacing:-0.26px;">周二</span>
<span class="t" style="left:463px;top:141.0px;line-height:16px;letter-spacing:-0.26px;">周三</span>
<span class="t" style="left:493px;top:141.0px;line-height:16px;letter-spacing:-0.26px;">周四</span>
<span class="t" style="left:523px;top:141.0px;line-height:16px;letter-spacing:-0.26px;">周五</span>
<span class="t" style="left:553px;top:141.0px;line-height:16px;letter-spacing:-0.26px;">周六</span>
<span class="t" style="left:583px;top:141.0px;line-height:16px;letter-spacing:-0.26px;">周日</span>
<div class="b" style="left:403px;top:157px;width:203px;height:1px;background:#ececec;"></div>
<div class="b" style="left:550px;top:209px;width:28px;height:15px;background:#d9d9d9;border:1px solid #3c7fd0;border-radius:2px;"></div>
<span class="t" style="left:558px;top:210.0px;line-height:16px;letter-spacing:0.07px;">25</span>
<span class="t" style="left:588px;top:210.0px;line-height:16px;letter-spacing:0.07px;">26</span>
<span class="t" style="left:408px;top:227.0px;line-height:16px;letter-spacing:0.07px;">27</span>
<span class="t" style="left:438px;top:227.0px;line-height:16px;letter-spacing:0.07px;">28</span>
<span class="t" style="left:468px;top:227.0px;line-height:16px;letter-spacing:0.07px;">29</span>
<span class="t" style="left:498px;top:227.0px;line-height:16px;letter-spacing:0.07px;">30</span>
<span class="t" style="left:528px;top:227.0px;line-height:16px;letter-spacing:0.07px;">31</span>
<span class="t" style="left:565px;top:227.0px;line-height:16px;color:#808080;">1</span>
<span class="t" style="left:595px;top:227.0px;line-height:16px;color:#808080;">2</span>
<span class="t" style="left:415px;top:244.0px;line-height:16px;color:#808080;">3</span>
<span class="t" style="left:445px;top:244.0px;line-height:16px;color:#808080;">4</span>
<span class="t" style="left:475px;top:244.0px;line-height:16px;color:#808080;">5</span>
<span class="t" style="left:505px;top:244.0px;line-height:16px;color:#808080;">6</span>
<span class="t" style="left:535px;top:244.0px;line-height:16px;color:#808080;">7</span>
<span class="t" style="left:565px;top:244.0px;line-height:16px;color:#808080;">8</span>
<div class="b" style="left:447px;top:262px;width:26px;height:13px;background:#fff;border:1px solid #2a78d0;border-radius:2px;"></div>
<span class="t" style="left:481px;top:262.0px;line-height:16px;letter-spacing:0.38px;">今天: 2021/12/25</span>
<div class="b" style="left:11px;top:395px;width:1046px;height:21px;background:#fff;border:1px solid #6a6a6a;"></div>
<span class="t" style="left:493px;top:399.5px;line-height:16px;color:#6d6d6d;font-weight:700;letter-spacing:-0.81px;"><span class="ar">↓</span>隐藏设置区域<span class="ar">↓</span></span>
<div class="b" style="left:12px;top:419px;width:1045px;height:252px;background:#fff;border:1px solid #6a6a6a;"></div>
<div class="b" style="left:17px;top:449px;width:429px;height:218px;background:#fff;border:1px solid #dcdcdc;"></div>
<div class="b" style="left:80px;top:427px;width:57px;height:22px;background:#f0f0f0;border:1px solid #d9d9d9;border-bottom:none;border-left:none;"></div>
<span class="t" style="left:85.5px;top:431.0px;line-height:16px;letter-spacing:-0.13px;">查询起售</span>
<div class="b" style="left:138px;top:427px;width:72px;height:22px;background:#f0f0f0;border:1px solid #d9d9d9;border-bottom:none;border-left:none;"></div>
<span class="t" style="left:145px;top:431.0px;line-height:16px;letter-spacing:-0.10px;">验证码设置</span>
<div class="b" style="left:211px;top:427px;width:55px;height:22px;background:#f0f0f0;border:1px solid #d9d9d9;border-bottom:none;border-left:none;"></div>
<span class="t" style="left:217px;top:431.0px;line-height:16px;letter-spacing:0.21px;">QQ通知</span>
<div class="b" style="left:267px;top:427px;width:58px;height:22px;background:#f0f0f0;border:1px solid #d9d9d9;border-bottom:none;border-left:none;"></div>
<span class="t" style="left:273px;top:431.0px;line-height:16px;letter-spacing:-0.13px;">邮件通知</span>
<div class="b" style="left:326px;top:427px;width:60px;height:22px;background:#f0f0f0;border:1px solid #d9d9d9;border-bottom:none;border-left:none;"></div>
<span class="t" style="left:333.5px;top:431.0px;line-height:16px;letter-spacing:-0.13px;">微信通知</span>
<div class="b" style="left:387px;top:427px;width:57px;height:22px;background:#f0f0f0;border:1px solid #d9d9d9;border-bottom:none;border-left:none;"></div>
<span class="t" style="left:393px;top:431.0px;line-height:16px;letter-spacing:-0.13px;">自动支付</span>
<div class="b" style="left:17px;top:425px;width:63px;height:25px;background:#fff;border:1px solid #d9d9d9;border-bottom:none;"></div>
<span class="t" style="left:25px;top:429.0px;line-height:16px;">抢票设置</span>
<span class="t" style="left:25px;top:455.0px;line-height:16px;color:#6d6d6d;font-weight:700;letter-spacing:0.06px;">*选择乘客:</span>
<span class="t" style="left:151px;top:455.0px;line-height:16px;color:#6d6d6d;font-weight:700;letter-spacing:0.06px;">*选择席位:</span>
<span class="t" style="left:252px;top:455.0px;line-height:16px;color:#6d6d6d;font-weight:700;letter-spacing:0.06px;">*已选车次:</span>
<span class="t" style="left:339.5px;top:454.5px;line-height:16px;color:#6d6d6d;font-weight:700;letter-spacing:-0.20px;">可选设置:</span>
<div class="b" style="left:25px;top:474px;width:118px;height:182px;background:#fff;border:1px solid #828790;"></div>
<span class="t" style="left:83px;top:477.0px;line-height:16px;letter-spacing:-0.17px;">[成人]</span>
<div class="b" style="left:28px;top:478px;width:11px;height:11px;background:#fff;border:1px solid #333;"></div>
<span class="t" style="left:83px;top:495.0px;line-height:16px;letter-spacing:-0.17px;">[成人]</span>
<div class="b" style="left:28px;top:496px;width:11px;height:11px;background:#fff;border:1px solid #333;"></div>
<span class="t" style="left:83px;top:513.0px;line-height:16px;letter-spacing:-0.17px;">[成人]</span>
<div class="b" style="left:28px;top:514px;width:11px;height:11px;background:#fff;border:1px solid #333;"></div>
<div class="b" style="left:42px;top:530px;width:101px;height:18px;background:#0078d7;"></div>
<span class="t" style="left:46px;top:531.0px;line-height:16px;color:#fff;letter-spacing:0.06px;">汪磊[成人]</span>
<div class="b" style="left:28px;top:532px;width:11px;height:11px;background:#fff;border:1px solid #333;"></div>
<svg class="b" style="left:28px;top:532px;" width="13" height="13" viewBox="0 0 13 13"><path d="M2.6 6.4 L5.3 9.3 L10.6 3.4" fill="none" stroke="#333" stroke-width="1.15"/></svg>
<span class="t" style="left:83px;top:549.0px;line-height:16px;letter-spacing:-0.17px;">[成人]</span>
<div class="b" style="left:28px;top:550px;width:11px;height:11px;background:#fff;border:1px solid #333;"></div>
<div class="b" style="left:151px;top:474px;width:93px;height:182px;background:#fff;border:1px solid #828790;"></div>
<span class="t" style="left:172.5px;top:477.0px;line-height:16px;letter-spacing:-0.41px;">硬卧</span>
<div class="b" style="left:154px;top:478px;width:11px;height:11px;background:#fff;border:1px solid #333;"></div>
<svg class="b" style="left:154px;top:478px;" width="13" height="13" viewBox="0 0 13 13"><path d="M2.6 6.4 L5.3 9.3 L10.6 3.4" fill="none" stroke="#333" stroke-width="1.15"/></svg>
<span class="t" style="left:172.5px;top:495.0px;line-height:16px;letter-spacing:-0.41px;">硬座</span>
<div class="b" style="left:154px;top:496px;width:11px;height:11px;background:#fff;border:1px solid #333;"></div>
<svg class="b" style="left:154px;top:496px;" width="13" height="13" viewBox="0 0 13 13"><path d="M2.6 6.4 L5.3 9.3 L10.6 3.4" fill="none" stroke="#333" stroke-width="1.15"/></svg>
<span class="t" style="left:172.5px;top:513.0px;line-height:16px;letter-spacing:-0.41px;">二等座</span>
<div class="b" style="left:154px;top:514px;width:11px;height:11px;background:#fff;border:1px solid #333;"></div>
<svg class="b" style="left:154px;top:514px;" width="13" height="13" viewBox="0 0 13 13"><path d="M2.6 6.4 L5.3 9.3 L10.6 3.4" fill="none" stroke="#333" stroke-width="1.15"/></svg>
<div class="b" style="left:168px;top:530px;width:59px;height:18px;background:#0078d7;"></div>
<span class="t" style="left:172.5px;top:531.0px;line-height:16px;color:#fff;letter-spacing:-0.41px;">一等座</span>
<div class="b" style="left:154px;top:532px;width:11px;height:11px;background:#fff;border:1px solid #333;"></div>
<svg class="b" style="left:154px;top:532px;" width="13" height="13" viewBox="0 0 13 13"><path d="M2.6 6.4 L5.3 9.3 L10.6 3.4" fill="none" stroke="#333" stroke-width="1.15"/></svg>
<span class="t" style="left:172.5px;top:549.0px;line-height:16px;letter-spacing:-0.41px;">无座</span>
<div class="b" style="left:154px;top:550px;width:11px;height:11px;background:#fff;border:1px solid #333;"></div>
<span class="t" style="left:172.5px;top:567.0px;line-height:16px;letter-spacing:-0.41px;">软卧</span>
<div class="b" style="left:154px;top:568px;width:11px;height:11px;background:#fff;border:1px solid #333;"></div>
<span class="t" style="left:172.5px;top:585.0px;line-height:16px;letter-spacing:-0.41px;">动卧</span>
<div class="b" style="left:154px;top:586px;width:11px;height:11px;background:#fff;border:1px solid #333;"></div>
<span class="t" style="left:172.5px;top:603.0px;line-height:16px;letter-spacing:-0.41px;">软座</span>
<div class="b" style="left:154px;top:604px;width:11px;height:11px;background:#fff;border:1px solid #333;"></div>
<span class="t" style="left:172.5px;top:621.0px;line-height:16px;letter-spacing:-0.41px;">商务座</span>
<div class="b" style="left:154px;top:622px;width:11px;height:11px;background:#fff;border:1px solid #333;"></div>
<span class="t" style="left:172.5px;top:639.0px;line-height:16px;letter-spacing:-0.41px;">特等座</span>
<div class="b" style="left:154px;top:640px;width:11px;height:11px;background:#fff;border:1px solid #333;"></div>
<div class="b" style="left:228px;top:475px;width:16px;height:182px;background:#f0f0f0;"></div>
<div class="b" style="left:228px;top:493px;width:15px;height:122px;background:#cdcdcd;"></div>
<svg class="b" style="left:231px;top:481px;" width="10" height="8" viewBox="0 0 10 8"><path d="M1.3 6 L5 2.3 L8.7 6" fill="none" stroke="#505050" stroke-width="1.6"/></svg>
<svg class="b" style="left:231px;top:644px;" width="10" height="8" viewBox="0 0 10 8"><path d="M1.3 2 L5 5.7 L8.7 2" fill="none" stroke="#505050" stroke-width="1.6"/></svg>
<div class="b" style="left:252px;top:474px;width:76px;height:182px;background:#f0f0f0;border:1px solid #828790;"></div>
<div class="b" style="left:336px;top:477px;width:9px;height:9px;background:#fff;border:1px solid #1a1a1a;"></div>
<span class="t" style="left:353.5px;top:475.0px;line-height:16px;letter-spacing:-0.07px;">同时抢候补功能</span>
<div class="b" style="left:336px;top:504px;width:9px;height:9px;background:#fff;border:1px solid #5a5a5a;"></div>
<span class="t" style="left:353.5px;top:502.0px;line-height:16px;color:#707070;letter-spacing:-0.07px;">只抢候补不抢票</span>
<div class="b" style="left:336px;top:531px;width:9px;height:9px;background:#fff;border:1px solid #5a5a5a;"></div>
<span class="t" style="left:353.5px;top:529.0px;line-height:16px;color:#707070;letter-spacing:-0.07px;">无座席位也候补</span>
<div class="b" style="left:336px;top:558px;width:9px;height:9px;background:#fff;border:1px solid #1a1a1a;"></div>
<span class="t" style="left:353.5px;top:556.0px;line-height:16px;letter-spacing:-0.07px;">高铁和动车选座</span>
<div class="b" style="left:336px;top:585px;width:9px;height:9px;background:#fff;border:1px solid #1a1a1a;"></div>
<span class="t" style="left:353.5px;top:583.0px;line-height:16px;letter-spacing:-0.07px;">抢到票自动支付</span>
<div class="b" style="left:336px;top:612px;width:9px;height:9px;background:#fff;border:1px solid #1a1a1a;"></div>
<svg class="b" style="left:336px;top:612px;" width="11" height="11" viewBox="0 0 11 11"><path d="M2.2 5.2 L4.5 7.8 L8.8 2.8" fill="none" stroke="#000" stroke-width="1.9"/></svg>
<span class="t" style="left:353.5px;top:610.0px;line-height:16px;letter-spacing:-0.07px;">自动抢增开列车</span>
<div class="b" style="left:335px;top:630px;width:104px;height:23px;background:#fff;border:1px solid #7a7a7a;"></div>
<span class="t" style="left:338.5px;top:634.0px;line-height:16px;letter-spacing:0.22px;">00:00-24:00</span>
<svg class="b" style="left:425px;top:639px;" width="12" height="8" viewBox="0 0 12 8"><path d="M1.7 1.8 L6 6 L10.3 1.8" fill="none" stroke="#444" stroke-width="1.1"/></svg>
<div class="b" style="left:452px;top:435px;width:423px;height:231px;border:1px solid #dcdcdc;"></div>
<div class="b" style="left:459px;top:428px;width:40px;height:16px;background:#fff;"></div>
<span class="t" style="left:461px;top:428.0px;line-height:16px;letter-spacing:-0.17px;">输出区</span>
<div class="b" style="left:459px;top:443px;width:408px;height:219px;background:#fff;border:1px solid #7a7a7a;"></div>
<div class="b" style="left:460px;top:444px;width:391px;height:218px;overflow:hidden;">
<span class="t" style="left:5px;top:3.0px;line-height:16px;color:#4682b4;letter-spacing:0.12px;">11:08:18:0</span>
<span class="t" style="left:70.5px;top:3.0px;line-height:16px;color:#4682b4;letter-spacing:0.14px;">查询完毕，本次查询共用时:697毫秒。</span>
<span class="t" style="left:5px;top:20.0px;line-height:16px;color:#4682b4;letter-spacing:0.12px;">11:07:28:5</span>
<span class="t" style="left:70.5px;top:20.0px;line-height:16px;color:#4682b4;letter-spacing:-0.03px;">获取到:745个CDN,开始智能测速中...</span>
<span class="t" style="left:5px;top:37.0px;line-height:16px;color:#4682b4;letter-spacing:0.12px;">11:07:28:4</span>
<span class="t" style="left:70.5px;top:37.0px;line-height:16px;color:#4682b4;letter-spacing:0.13px;">[自动处理]已关闭[同时抢候补功能]，开启刷票模式，只刷票</span>
<span class="t" style="left:4.5px;top:54.0px;line-height:16px;color:#4682b4;">不抢候补。</span>
<span class="t" style="left:5px;top:71.0px;line-height:16px;color:#4682b4;letter-spacing:0.12px;">11:07:28:4</span>
<span class="t" style="left:70.5px;top:71.0px;line-height:16px;color:#4682b4;letter-spacing:0.05px;">该的账号没有开通候补功能，请点击[同时抢候补功能]选项</span>
<span class="t" style="left:4.5px;top:88.0px;line-height:16px;color:#4682b4;letter-spacing:-0.02px;">，完成人脸核验后即可使用候补功能!</span>
<span class="t" style="left:5px;top:105.0px;line-height:16px;color:#4682b4;letter-spacing:0.12px;">11:07:28:1</span>
<span class="t" style="left:70.5px;top:105.0px;line-height:16px;color:#4682b4;letter-spacing:-0.20px;">您还没有绑定微信通知，建议绑定微信通知，接受消息。</span>
<span class="t" style="left:5px;top:122.0px;line-height:16px;color:#4682b4;letter-spacing:0.12px;">11:07:27:9</span>
<span class="t" style="left:70.5px;top:122.0px;line-height:16px;color:#4682b4;letter-spacing:0.12px;">链接12306服务器速度:193毫秒[优]</span>
<span class="t" style="left:5px;top:139.0px;line-height:16px;color:#4682b4;letter-spacing:0.12px;">11:07:27:4</span>
<span class="t" style="left:70.5px;top:139.0px;line-height:16px;color:#4682b4;letter-spacing:-0.18px;">正在初始化...已完成</span>
<span class="t" style="left:5px;top:156.0px;line-height:16px;color:#4682b4;letter-spacing:0.12px;">11:06:28:6</span>
<span class="t" style="left:70.5px;top:156.0px;line-height:16px;color:#4682b4;letter-spacing:0.03px;">[设置完毕]已同步时间</span>
<span class="t" style="left:5px;top:173.0px;line-height:16px;color:#4682b4;letter-spacing:0.12px;">11:06:28:6</span>
<span class="t" style="left:70.5px;top:173.0px;line-height:16px;color:#4682b4;letter-spacing:0.34px;">[本地时间]：2021-12-25 11:06:30</span>
<span class="t" style="left:5px;top:190.0px;line-height:16px;color:#4682b4;letter-spacing:0.12px;">11:06:28:6</span>
<span class="t" style="left:70.5px;top:190.0px;line-height:16px;color:#4682b4;letter-spacing:0.37px;">[服务器-1]：2021-12-25 11:06:28</span>
<span class="t" style="left:5px;top:207.0px;line-height:16px;color:#4682b4;letter-spacing:0.12px;">11:06:28:6</span>
<span class="t" style="left:70.5px;top:207.0px;line-height:16px;color:#4682b4;letter-spacing:0.05px;">正在从[1]号服务器获取时间</span>
</div>
<div class="b" style="left:851px;top:445px;width:16px;height:217px;background:#f0f0f0;"></div>
<div class="b" style="left:851px;top:462px;width:15px;height:157px;background:#cdcdcd;"></div>
<svg class="b" style="left:854px;top:450px;" width="10" height="8" viewBox="0 0 10 8"><path d="M1.3 6 L5 2.3 L8.7 6" fill="none" stroke="#505050" stroke-width="1.7"/></svg>
<svg class="b" style="left:854px;top:650px;" width="10" height="8" viewBox="0 0 10 8"><path d="M1.3 2 L5 5.7 L8.7 2" fill="none" stroke="#505050" stroke-width="1.7"/></svg>
<div class="b" style="left:883px;top:435px;width:163px;height:174px;border:1px solid #dcdcdc;"></div>
<div class="b" style="left:890px;top:428px;width:40px;height:16px;background:#fff;"></div>
<span class="t" style="left:892px;top:428.0px;line-height:16px;letter-spacing:-0.17px;">设置区</span>
<div class="b" style="left:889px;top:454px;width:9px;height:9px;background:#fff;border:1px solid #1a1a1a;"></div>
<span class="t" style="left:906px;top:452.0px;line-height:16px;">定时抢票</span>
<div class="b" style="left:967px;top:448px;width:70px;height:21px;background:#fff;border:1px solid #6e6e6e;"></div>
<span class="t" style="left:969.5px;top:452.0px;line-height:16px;letter-spacing:0.10px;">05:00:00</span>
<div class="b" style="left:889px;top:482px;width:9px;height:9px;background:#fff;border:1px solid #1a1a1a;"></div>
<span class="t" style="left:906px;top:480.0px;line-height:16px;">修改间隔</span>
<div class="b" style="left:967px;top:477px;width:70px;height:21px;background:#f0f0f0;border:1px solid #c4c4c4;"></div>
<span class="t" style="left:970.5px;top:480.0px;line-height:16px;color:#8a8a8a;letter-spacing:-0.18px;">1000</span>
<div class="b" style="left:889px;top:510px;width:9px;height:9px;background:#fff;border:1px solid #1a1a1a;"></div>
<svg class="b" style="left:889px;top:510px;" width="11" height="11" viewBox="0 0 11 11"><path d="M2.2 5.2 L4.5 7.8 L8.8 2.8" fill="none" stroke="#000" stroke-width="1.9"/></svg>
<span class="t" style="left:906px;top:508.0px;line-height:16px;">小黑屋</span>
<div class="b" style="left:967px;top:503px;width:70px;height:21px;background:#fff;border:1px solid #b4b4b4;"></div>
<span class="t" style="left:970.5px;top:505.5px;line-height:16px;letter-spacing:-0.34px;">120</span>
<div class="b" style="left:1021px;top:451px;width:13px;height:6px;background:#f0f0f0;border:1px solid #c8c8c8;"></div>
<svg class="b" style="left:1021px;top:451px;" width="15" height="8" viewBox="0 0 15 8"><path d="M4.5 5.5 L7.5 2.0 L10.5 5.5 Z" fill="#1a1a1a"/></svg>
<div class="b" style="left:1021px;top:460px;width:13px;height:6px;background:#f0f0f0;border:1px solid #c8c8c8;"></div>
<svg class="b" style="left:1021px;top:460px;" width="15" height="8" viewBox="0 0 15 8"><path d="M4.5 2.5 L7.5 6.0 L10.5 2.5 Z" fill="#1a1a1a"/></svg>
<div class="b" style="left:1021px;top:480px;width:13px;height:6px;background:#f0f0f0;border:1px solid #dadada;"></div>
<svg class="b" style="left:1021px;top:480px;" width="15" height="8" viewBox="0 0 15 8"><path d="M4.5 5.5 L7.5 2.0 L10.5 5.5 Z" fill="#8a8a8a"/></svg>
<div class="b" style="left:1021px;top:489px;width:13px;height:6px;background:#f0f0f0;border:1px solid #dadada;"></div>
<svg class="b" style="left:1021px;top:489px;" width="15" height="8" viewBox="0 0 15 8"><path d="M4.5 2.5 L7.5 6.0 L10.5 2.5 Z" fill="#8a8a8a"/></svg>
<div class="b" style="left:1021px;top:506px;width:13px;height:6px;background:#f0f0f0;border:1px solid #c8c8c8;"></div>
<svg class="b" style="left:1021px;top:506px;" width="15" height="8" viewBox="0 0 15 8"><path d="M4.5 5.5 L7.5 2.0 L10.5 5.5 Z" fill="#1a1a1a"/></svg>
<div class="b" style="left:1021px;top:515px;width:13px;height:6px;background:#f0f0f0;border:1px solid #c8c8c8;"></div>
<svg class="b" style="left:1021px;top:515px;" width="15" height="8" viewBox="0 0 15 8"><path d="M4.5 2.5 L7.5 6.0 L10.5 2.5 Z" fill="#1a1a1a"/></svg>
<div class="b" style="left:889px;top:537px;width:9px;height:9px;background:#fff;border:1px solid #1a1a1a;"></div>
<svg class="b" style="left:889px;top:537px;" width="11" height="11" viewBox="0 0 11 11"><path d="M2.2 5.2 L4.5 7.8 L8.8 2.8" fill="none" stroke="#000" stroke-width="1.9"/></svg>
<span class="t" style="left:906px;top:535.0px;line-height:16px;letter-spacing:-0.20px;">全国CDN</span>
<span class="t" style="left:969px;top:535.0px;line-height:16px;color:#6d6d6d;font-weight:bold;">可用：309</span>
<div class="b" style="left:889px;top:564px;width:9px;height:9px;background:#fff;border:1px solid #1a1a1a;"></div>
<span class="t" style="left:906px;top:562.0px;line-height:16px;letter-spacing:-0.03px;">实时余票无座时,不提交</span>
<div class="b" style="left:889px;top:591px;width:9px;height:9px;background:#fff;border:1px solid #1a1a1a;"></div>
<span class="t" style="left:906px;top:589.0px;line-height:16px;letter-spacing:-0.03px;">余票不足乘客时,部分提交</span>
<div class="b" style="left:884px;top:619px;width:161px;height:40px;background:#e1e1e1;border:1px solid #adadad;"></div>
<span class="t" style="left:939px;top:636.0px;line-height:16px;color:#1e90ff;font-size:13px;font-weight:bold;">开始抢票</span>
<div class="b" style="left:1px;top:686px;width:1068px;height:22px;background:#f0f0f0;"></div>
<div class="b" style="left:1px;top:686px;width:1068px;height:1px;background:#e2e2e2;"></div>
<svg class="b" style="left:4px;top:691px;" width="13" height="13" viewBox="0 0 13 13"><circle cx="6.5" cy="6.5" r="5.7" fill="none" stroke="#222" stroke-width="1.1"/><path d="M6.5 5.6 V9.6 M6.5 3.2 V4.5" stroke="#222" stroke-width="1.2"/></svg>
<span class="t" style="left:21.5px;top:690.5px;line-height:16px;color:#2f3f4f;">当前账号:[张博宏]【免费用户】</span>
<div class="b" style="left:193px;top:689px;width:1px;height:17px;background:#a8a8a8;"></div>
<svg class="b" style="left:199px;top:691px;" width="13" height="13" viewBox="0 0 13 13"><rect x="0.8" y="0.8" width="11" height="11" rx="1.2" fill="none" stroke="#222" stroke-width="1.3"/><path d="M9.4 3.2 L4.4 8.2 M4.2 4.4 V8.4 H8.2" fill="none" stroke="#222" stroke-width="1.4"/><rect x="1.4" y="9" width="2.2" height="2.2" fill="#222"/></svg>
<span class="t" style="left:216px;top:690.5px;line-height:16px;color:#2f3f4f;letter-spacing:-0.01px;">推送</span>
<div class="b" style="left:245px;top:689px;width:1px;height:17px;background:#a8a8a8;"></div>
<svg class="b" style="left:250px;top:690px;" width="14" height="14" viewBox="0 0 14 14"><g transform="rotate(-45 7 7.5)"><rect x="1" y="4.7" width="12" height="5.6" rx="1.6" fill="none" stroke="#222" stroke-width="1.3"/><path d="M9.6 4.7 V10.3" stroke="#222" stroke-width="1.2"/></g></svg>
<span class="t" style="left:268px;top:690.5px;line-height:16px;color:#2f3f4f;letter-spacing:-0.12px;">进度:</span>
<div class="b" style="left:301px;top:689px;width:98px;height:14px;background:#e6e6e6;border:1px solid #bcbcbc;"></div>
<span class="t" style="left:724.5px;top:691.5px;line-height:16px;color:#a050c8;letter-spacing:0.84px;">最新动态：罗**在11:06:2</span>
<span class="t" style="left:975px;top:691.5px;line-height:16px;color:#a050c8;">分流抢票</span>
<div class="b" style="left:1064px;top:696px;width:2px;height:2px;background:#a8a8a8;"></div>
<div class="b" style="left:1064px;top:700px;width:2px;height:2px;background:#a8a8a8;"></div>
<div class="b" style="left:1064px;top:704px;width:2px;height:2px;background:#a8a8a8;"></div>
<div class="b" style="left:1060px;top:704px;width:2px;height:2px;background:#a8a8a8;"></div>
<div class="b" style="left:1056px;top:704px;width:2px;height:2px;background:#a8a8a8;"></div>
<div class="b" style="left:1060px;top:700px;width:2px;height:2px;background:#a8a8a8;"></div>
<div class="b" style="left:866px;top:645px;width:200px;height:59px;background:#fff;"></div>
<svg class="b" style="left:866px;top:645px;" width="74" height="56" viewBox="0 0 74 56"><rect x="0" y="0" width="74" height="56" fill="#3a820f"/><path d="M0 40 L3.7 31.6 L6 27.5 L12.4 23.4 L18.8 23.8 L25.2 17.4 L34.4 17 L39 13.7 L45.4 12.8 L53.2 16 L48.1 35.3 L58.2 35.3 L61.9 36.2 L74 36.7 V56 H0 Z" fill="#0a84a8"/><path d="M3.7 31.6 L6 27.5 L10 25 L11 33 L4 34 Z" fill="#3a62aa"/><path d="M18.8 23.8 L25.2 17.4 L26 38 L29 56 H16 L12 44 L19 42 Z" fill="#0a78d8"/><path d="M25.2 17.4 L34.4 17 L33 38 L36.5 56 H28.5 L25.6 38 Z" fill="#0aa8f0"/><path d="M34.4 17 L39 13.7 V56 H36.5 L33 38 Z" fill="#3a62aa"/><path d="M39 13.7 L42 13.2 V56 H39 Z" fill="#0a84a8"/><path d="M42 13.2 L45.4 12.8 V56 H42 Z" fill="#0a78d8"/><path d="M45.4 12.8 L53.2 16 L48.1 35.3 L50 56 H45.4 Z" fill="#0aa8f0"/><path d="M48.4 35.3 H55 V56 H50 Z" fill="#0a84a8"/><path d="M55 35.3 L58.2 35.3 L61.9 36.2 L74 36.7 V43 H59.4 V56 H55 Z" fill="#0a78d8"/><rect x="59.4" y="43" width="14.6" height="13" fill="#0aa8f0"/><rect x="0" y="48" width="5" height="8" fill="#3a62aa"/><rect x="0" y="0" width="1.6" height="40" fill="#006e6a"/></svg>
<span class="t" style="left:936px;top:663.5px;line-height:30px;color:#80848e;font-size:24px;letter-spacing:1.20px;font-weight:900;">亮客吧论坛</span>
</body></html>
